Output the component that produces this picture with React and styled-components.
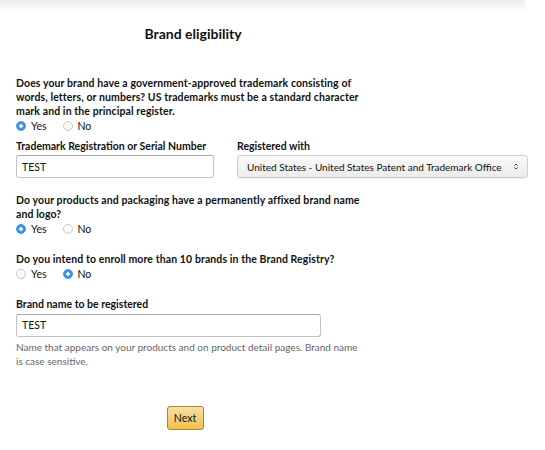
import styled, { createGlobalStyle } from "styled-components";

const GlobalStyle = createGlobalStyle`
  body {
    margin: 0;
    background: #fff;
    font-family: Lato, "Liberation Sans", sans-serif;
    color: #111;
  }
`;

const Radio = ({ checked, label }) => (
  <RadioLabel>
    <RadioDot checked={checked} />
    {label}
  </RadioLabel>
);

const YesNo = ({ value }) => (
  <RadioRow>
    <Radio checked={value === "Yes"} label="Yes" />
    <Radio checked={value === "No"} label="No" />
  </RadioRow>
);

const App = () => {
  return (
    <Page>
      <GlobalStyle />
      <TopShade />
      <Title>Brand eligibility</Title>

      <Question>
        Does your brand have a government-approved trademark consisting of
        words, letters, or numbers? US trademarks must be a standard character
        mark and in the principal register.
      </Question>
      <YesNo value="Yes" />

      <FieldRow>
        <Field>
          <Label>Trademark Registration or Serial Number</Label>
          <TextInput width="198px" value="TEST" readOnly />
        </Field>
        <Field>
          <Label>Registered with</Label>
          <Select>
            United States - United States Patent and Trademark Office
            <Arrows>
              <svg width="6" height="9" viewBox="0 0 6 9">
                <path d="M1.5 3.5 L3 2 L4.5 3.5" fill="none" stroke="#444" strokeWidth="1" />
                <path d="M1.5 5.5 L3 7 L4.5 5.5" fill="none" stroke="#444" strokeWidth="1" />
              </svg>
            </Arrows>
          </Select>
        </Field>
      </FieldRow>

      <Question top="15px">
        Do your products and packaging have a permanently affixed brand name
        and logo?
      </Question>
      <YesNo value="Yes" />

      <Question top="16px">
        Do you intend to enroll more than 10 brands in the Brand Registry?
      </Question>
      <YesNo value="No" />

      <Label top="16px">Brand name to be registered</Label>
      <TextInput width="305px" value="TEST" readOnly />
      <Hint>
        Name that appears on your products and on product detail pages. Brand
        name is case sensitive.
      </Hint>

      <ButtonRow>
        <NextButton>Next</NextButton>
      </ButtonRow>
    </Page>
  );
};

const Page = styled.div`
  position: relative;
  width: 545px;
  height: 450px;
  box-sizing: border-box;
  padding: 25px 16px 0 16px;
  overflow: hidden;
`;

const TopShade = styled.div`
  position: absolute;
  top: 0;
  left: 0;
  right: 20px;
  height: 12px;
  background: linear-gradient(#ececec, #fff);
`;

const Title = styled.h1`
  width: 354px;
  margin: 0 0 33px 0;
  text-align: center;
  font-size: 14px;
  font-weight: 700;
  line-height: 18px;
  color: #111;
`;

const Question = styled.p`
  width: 350px;
  margin: ${(p) => p.top || "0"} 0 0 0;
  font-size: 10.5px;
  letter-spacing: 0.1px;
  font-weight: 700;
  line-height: 14px;
`;

const RadioRow = styled.div`
  display: flex;
  gap: 16px;
  margin-top: 1px;
  height: 14px;
  align-items: center;
`;

const RadioLabel = styled.label`
  display: flex;
  align-items: center;
  gap: 5px;
  font-size: 10.5px;
  color: #111;
`;

const RadioDot = styled.span`
  box-sizing: border-box;
  width: 10px;
  height: 10px;
  border-radius: 50%;
  border: 1px solid ${(p) => (p.checked ? "#3b8fe8" : "#c8c8c8")};
  background: ${(p) =>
    p.checked
      ? "radial-gradient(circle, #fff 0 1.5px, #3d92ec 2px)"
      : "linear-gradient(#fff, #f4f4f4)"};
`;

const FieldRow = styled.div`
  display: flex;
  gap: 23px;
  margin-top: 6px;
`;

const Field = styled.div`
  display: flex;
  flex-direction: column;
`;

const Label = styled.div`
  margin-top: ${(p) => p.top || "0"};
  margin-bottom: 2px;
  font-size: 10.5px;
  font-weight: 700;
  line-height: 14px;
`;

const TextInput = styled.input`
  box-sizing: border-box;
  width: ${(p) => p.width};
  height: 23px;
  padding: 0 5px;
  border: 1px solid #c3c3c3;
  border-top-color: #a8a8a8;
  border-radius: 3px;
  font-family: Lato, "Liberation Sans", sans-serif;
  font-size: 10.5px;
  color: #111;
  outline: none;
`;

const Select = styled.div`
  box-sizing: border-box;
  display: flex;
  align-items: center;
  justify-content: space-between;
  width: 291px;
  height: 23px;
  padding: 0 8px 0 9px;
  border: 1px solid #cfcfcf;
  border-radius: 3px;
  background: linear-gradient(#f9f9f9, #ececec);
  box-shadow: 0 1px 0 rgba(0, 0, 0, 0.05);
  font-size: 10px;
  color: #111;
  white-space: nowrap;
`;

const Arrows = styled.span`
  display: flex;
  align-items: center;
`;

const Hint = styled.p`
  width: 342px;
  margin: 3px 0 0 0;
  font-size: 10px;
  line-height: 14px;
  color: #666;
`;

const ButtonRow = styled.div`
  width: 338px;
  display: flex;
  justify-content: center;
  margin-top: 38px;
`;

const NextButton = styled.button`
  box-sizing: border-box;
  width: 37px;
  height: 24px;
  padding: 0;
  border: 1px solid #a88734;
  border-radius: 3px;
  background: linear-gradient(#f7dfa5, #f0c14b);
  font-family: Lato, "Liberation Sans", sans-serif;
  font-size: 10.5px;
  color: #111;
`;

export default App;
